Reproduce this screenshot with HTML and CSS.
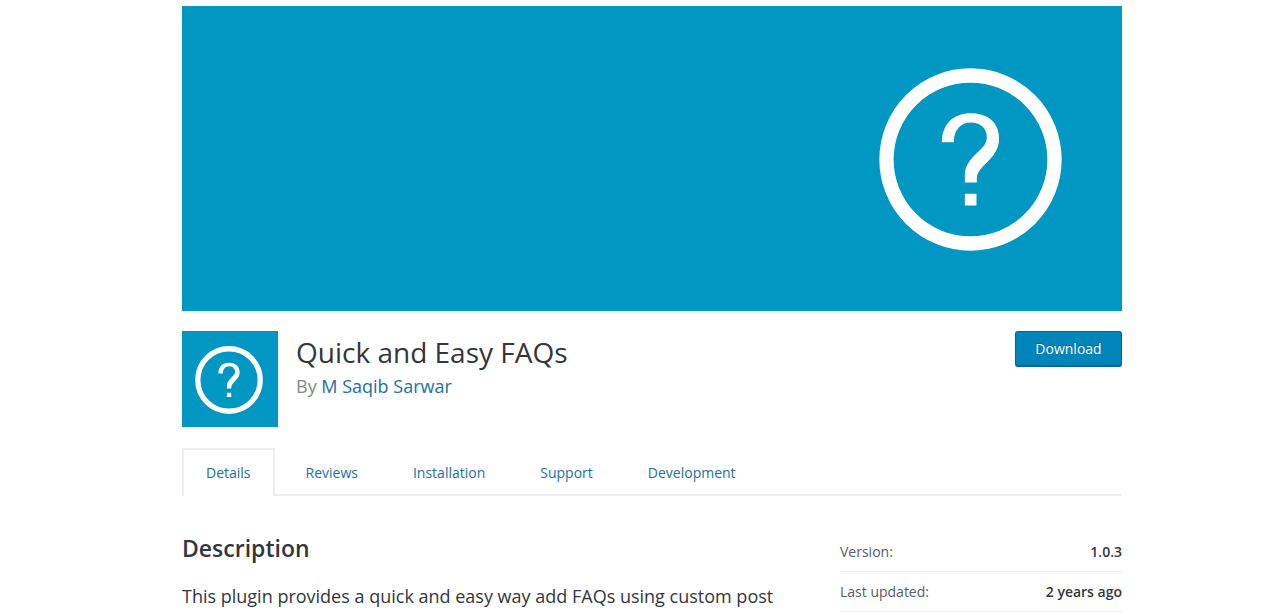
FILE: index.html
```html
<!DOCTYPE html>
<html lang="en">
<head>
<meta charset="utf-8">
<meta name="viewport" content="width=device-width, initial-scale=1">
<title>Quick and Easy FAQs</title>
<link rel="stylesheet" href="styles.css">
</head>
<body>
<main class="plugin">
  <div class="banner">
    <svg class="banner-mark" viewBox="57 55 550 550" aria-hidden="true">
      <g id="faq-mark">
        <circle cx="332" cy="330" r="252.500" fill="none" stroke="#fff" stroke-width="43"/>
        <path fill="#fff" d="M246 278C246 223 282 191 333 191C385 191 418 220 418 266C418 297 402 318 384 336C364 356 351 368 351 388V399H315V378C315 348 331 331 352 310C370 292 381 282 381 263C381 236 361 219 333 219C303 219 282 241 282 278ZM315 433H350V468H315Z"/>
      </g>
    </svg>
  </div>
  <header class="plugin-header">
    <div class="plugin-icon">
      <svg class="icon-mark" viewBox="57 55 550 550" aria-hidden="true"><use href="#faq-mark"/></svg>
    </div>
    <div class="plugin-heading">
      <h1 class="plugin-title">Quick and Easy FAQs</h1>
      <p class="byline">By <a class="link" href="#author">M Saqib Sarwar</a></p>
    </div>
    <button class="download" type="button">Download</button>
  </header>
  <nav class="tabs" aria-label="Plugin sections">
    <a class="tab tab-active" href="#details" aria-current="page">Details</a>
    <a class="tab" href="#reviews">Reviews</a>
    <a class="tab" href="#installation">Installation</a>
    <a class="tab" href="#support">Support</a>
    <a class="tab" href="#development">Development</a>
  </nav>
  <div class="columns">
    <section class="details" id="details">
      <h2 class="section-title">Description</h2>
      <p class="text">This plugin provides a quick and easy way add FAQs using custom post</p>
    </section>
    <aside class="sidebar">
      <dl class="meta">
        <div class="meta-row"><dt>Version:</dt><dd class="meta-value">1.0.3</dd></div>
        <div class="meta-row"><dt>Last updated:</dt><dd class="meta-value">2 years ago</dd></div>
      </dl>
    </aside>
  </div>
</main>
</body>
</html>
```
FILE: styles.css
```css
* {
  box-sizing: border-box;
}

body {
  margin: 0;
  padding: 6px 0 0 19px;
  background: #fff;
  color: #32373c;
  font-family: "Open Sans", sans-serif;
  font-size: 14px;
  line-height: 20px;
}

h1, h2, p, dl, dd {
  margin: 0;
}

.plugin {
  max-width: 940px;
  margin: 0 auto;
}

.banner {
  display: flex;
  align-items: center;
  justify-content: flex-end;
  height: 305px;
  padding: 2px 60px 0 0;
  background: #0097c3;
}

.banner-mark {
  width: 183px;
  height: 183px;
}

.plugin-header {
  display: flex;
  align-items: flex-start;
  padding-top: 20px;
}

.plugin-icon {
  display: grid;
  place-items: center;
  width: 96px;
  height: 96px;
  margin-right: 18px;
  padding: 2px 2px 0 0;
  background: #0097c3;
}

.icon-mark {
  width: 68px;
  height: 68px;
}

.plugin-heading {
  flex: 1;
}

.plugin-title {
  padding-top: 4px;
  color: #32373c;
  font-size: 28px;
  font-weight: 400;
  line-height: 34px;
}

.byline {
  padding-top: 2px;
  color: #82878c;
  font-size: 18px;
  line-height: 30px;
}

.link {
  color: #21709f;
  text-decoration: none;
}

.download {
  height: 36px;
  padding: 1px 18px 0;
  border: 1px solid #006799;
  border-bottom-width: 2px;
  border-radius: 3px;
  min-width: 107px;
  background: #0085ba;
  color: #fff;
  font: inherit;
  text-shadow: 0 -1px 1px #006799;
}

.tabs {
  display: flex;
  gap: 7px;
  margin-top: 21px;
  border-bottom: 2px solid #eee;
}

.tab {
  margin-bottom: -2px;
  padding: 13px 22px;
  border: 2px solid transparent;
  border-bottom: 0;
  color: #21709f;
  text-decoration: none;
}

.tab-active {
  border-color: #eee;
  background: #fff;
}

.columns {
  display: grid;
  grid-template-columns: 1fr 30%;
  gap: 32px;
  padding-top: 36px;
}

.section-title {
  font-size: 23px;
  font-weight: 600;
  line-height: 32px;
}

.text {
  padding-top: 16px;
  font-size: 18px;
  line-height: 32px;
}

.meta-row {
  display: flex;
  justify-content: space-between;
  padding: 10px 0 9px;
  border-bottom: 1px solid #eee;
  color: #555d66;
}

.meta-value {
  color: #32373c;
  font-weight: 600;
}
```
